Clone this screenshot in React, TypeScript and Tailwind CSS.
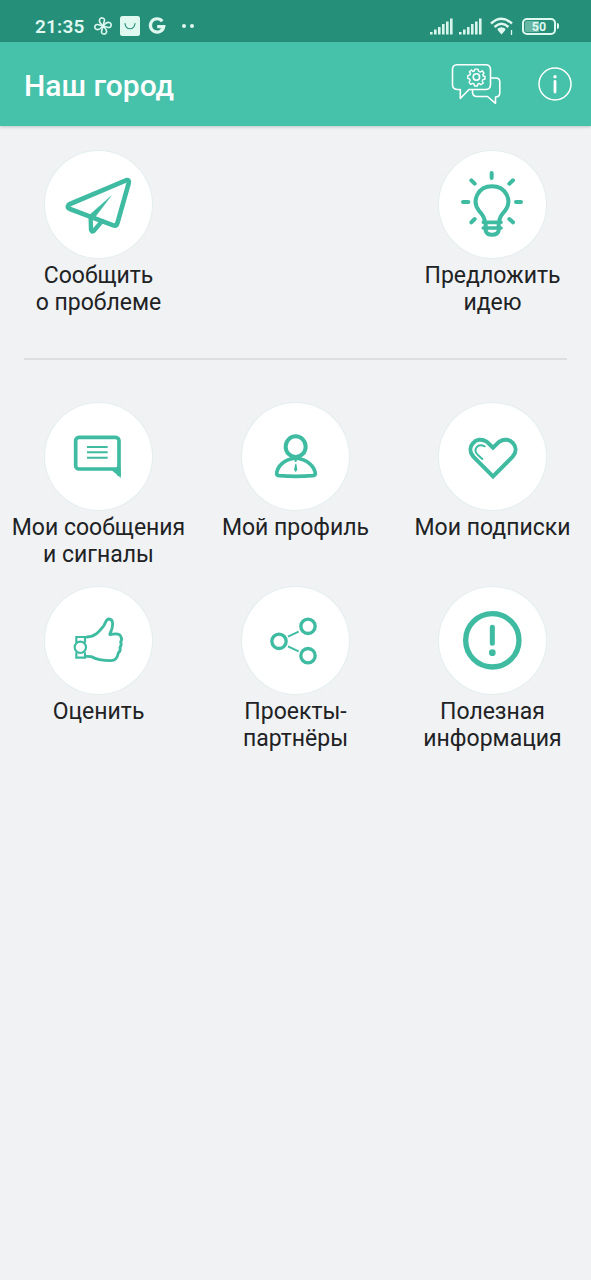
import React from "react"

type TypeTile = {
    icon: React.ReactNode
    lines: string[]
}

const Svg = ({ children }: { children: React.ReactNode }) => (
    <svg viewBox="0 0 321 321" className="size-full" fill="none" stroke="#3fbba2" strokeWidth="12" strokeLinecap="round" strokeLinejoin="round">
        {children}
    </svg>
)

const PlaneIcon = () => (
    <Svg>
        <path d="M69 165 Q70 161 75 159 L243 88 Q254 85 251 97 L217 217 Q214 226 205 223 L75 174 Q67 170 69 165Z" strokeWidth="14" />
        <path d="M137 202 L138 237 Q140 244 146 240 L170 212" strokeWidth="13" />
        <path d="M129 196 L199 134 L143 208 Z" fill="#3fbba2" strokeWidth="1" />
    </Svg>
)

const BulbIcon = () => (
    <Svg>
        <path d="M137 210 C136 196 127 188 120 179 C96 148 118 106 159 106 C200 106 222 148 198 179 C191 188 182 196 181 210" />
        <path d="M133 214 H186 M133 231 H186" strokeWidth="11" />
        <path d="M140 220 V238 Q142 251 159 251 Q177 251 179 238 V220" strokeWidth="12" />
        <path d="M158 66 V81 M97 88 L107 98 M222 88 L211 98 M72 153 H88 M231 153 H246 M97 214 L107 204 M222 214 L211 204" />
    </Svg>
)

const MessageIcon = () => (
    <Svg>
        <rect x="92" y="103" width="130" height="95" rx="10" strokeWidth="11" />
        <path d="M197 199 H227.5 V225 Z" fill="#3fbba2" stroke="none" />
        <path d="M222 190 V218" strokeWidth="11" strokeLinecap="butt" />
        <path d="M126 132 H188 M126 148 H188 M126 164 H188" strokeWidth="6" strokeLinecap="butt" />
    </Svg>
)

const ProfileIcon = () => (
    <Svg>
        <ellipse cx="161" cy="131" rx="30" ry="31" />
        <path d="M161 165 C126 169 105 190 104 213 Q105 217 112 218 Q161 222 212 218 Q219 217 220 213 C218 190 196 169 161 165Z" strokeWidth="11" />
        <path d="M156 168 H166 L163 177 H159Z M160 182 H163 L166 200 L161 207 L156 200Z" fill="#3fbba2" stroke="none" />
    </Svg>
)

const HeartIcon = () => (
    <Svg>
        <path d="M162 220 L103 161 C78 132 112 96 143 116 L162 134 L181 116 C212 96 246 132 221 161 Z" strokeLinejoin="miter" />
        <path d="M137 130 C115 120 101 140 116 155 L130 168" strokeWidth="6" />
    </Svg>
)

const ThumbIcon = () => (
    <Svg>
        <path d="M126 150 C154 149 166 129 175 118 C182 109 182 96 192 96 C205 97 204 111 201 124 C198 134 193 143 195 143 C207 140 225 138 228 150 Q232 157 227 165 Q231 173 225 181 Q228 190 220 198 C217 214 211 221 198 221 Q158 220 140 209 L125 208" strokeWidth="8.5" />
        <path d="M94 166 V150 H120 V165 M94 198 V212 H120 V198" strokeWidth="6.5" strokeLinejoin="miter" />
        <circle cx="106" cy="181" r="17" strokeWidth="6.5" />
    </Svg>
)

const ShareIcon = () => (
    <Svg>
        <circle cx="111" cy="163" r="21.5" strokeWidth="10" />
        <circle cx="198" cy="118" r="21.5" strokeWidth="10" />
        <circle cx="198" cy="206" r="21.5" strokeWidth="10" />
        <path d="M138 149 L170 134 M138 178 L170 193" strokeWidth="6" strokeLinecap="butt" />
    </Svg>
)

const AlertIcon = () => (
    <Svg>
        <circle cx="160" cy="160" r="80" strokeWidth="16" />
        <path d="M160 121 V169" strokeWidth="15" />
        <circle cx="160" cy="197" r="10" fill="#3fbba2" stroke="none" />
    </Svg>
)

const Tile = ({ icon, lines }: TypeTile) => {
    return (
        <div className="flex flex-col items-center">
            <span className="size-[107px] rounded-full bg-white shadow-[0_0_0_1px_#e4eeee]">{icon}</span>
            <p className="mt-1 text-center text-[23px] leading-[27px] whitespace-nowrap text-[#212224]">
                {lines.map((line) => (
                    <span key={line} className="block">{line}</span>
                ))}
            </p>
        </div>
    )
}

const Signal = () => (
    <svg viewBox="0 0 23 17" className="h-[17px] w-[23px]" fill="#d8f5ec">
        <rect x="0" y="14" width="2.6" height="2.5" />
        <rect x="4" y="11.5" width="2.6" height="5" />
        <rect x="8" y="9" width="2.6" height="7.5" />
        <rect x="12" y="6" width="2.6" height="10.5" />
        <rect x="16" y="3.5" width="2.6" height="13" />
        <rect x="20" y="0.5" width="2.6" height="16" />
    </svg>
)

const StatusBar = () => {
    return (
        <div className="flex h-[42px] items-center bg-[#268f79] pt-[10px] pr-8 pl-[35px] text-[#dff8f0]">
            <span className="mt-[2px] w-[50px] text-[19px] leading-8 font-semibold tracking-[0.2px]">21:35</span>
            <svg viewBox="0 0 18 18" className="ml-[9px] size-[18px]" fill="none" stroke="currentColor" strokeWidth="1.6" strokeLinejoin="round">
                <path d="M9 9 V3.5 C9 0.5 4 0.5 4 4 C4 7 7 7.5 9 9Z" transform="rotate(15 9 9)" />
                <path d="M9 9 V3.5 C9 0.5 4 0.5 4 4 C4 7 7 7.5 9 9Z" transform="rotate(105 9 9)" />
                <path d="M9 9 V3.5 C9 0.5 4 0.5 4 4 C4 7 7 7.5 9 9Z" transform="rotate(195 9 9)" />
                <path d="M9 9 V3.5 C9 0.5 4 0.5 4 4 C4 7 7 7.5 9 9Z" transform="rotate(285 9 9)" />
            </svg>
            <svg viewBox="0 0 20 20" className="ml-2 size-5">
                <rect width="20" height="20" rx="2.5" fill="#dff8f0" />
                <path d="M5 7.5 C6 14.5 14 14.5 15 7.5" fill="none" stroke="#268f79" strokeWidth="1.2" strokeLinecap="round" />
            </svg>
            <svg viewBox="0 0 18 18" className="ml-[8px] size-[18px]" fill="none" stroke="currentColor" strokeWidth="3.2">
                <path d="M14.3 4.2 A6.7 6.7 0 1 0 15.7 9.6 H9.2" />
            </svg>
            <span className="ml-[16px] size-[4px] rounded-full bg-current" />
            <span className="ml-[4px] size-[4px] rounded-full bg-current" />
            <div className="ml-auto flex items-center">
                <Signal />
                <span className="w-[6px]" />
                <Signal />
                <svg viewBox="0 0 24 18" className="ml-[8px] h-[18px] w-6" fill="none" stroke="currentColor" strokeWidth="2.4">
                    <path d="M1 6.5 Q11.5 -3 22 6.5 M4.5 10 Q11.5 3.5 18.5 10 M8 13 Q11.5 10 15 13" />
                    <path d="M8 13.5 L11.5 17.5 L15 13.5 Q11.5 11 8 13.5Z" fill="currentColor" stroke="none" />
                    <path d="M21.5 13 V18" strokeWidth="1.3" />
                </svg>
                <span className="ml-[8px] flex h-[17px] w-[34px] rounded-[5px] border-2 border-current bg-[linear-gradient(90deg,#66b7a3_50%,transparent_50%)] bg-clip-content p-px">
                    <span className="w-full text-center text-[12.5px] leading-[12px] font-bold">50</span>
                </span>
                <span className="ml-px h-[6px] w-[2px] rounded-r bg-current" />
            </div>
        </div>
    )
}

const Header = () => {
    return (
        <header className="flex h-[84px] items-center bg-[#46c1aa] pr-[19px] pl-6 text-white shadow-[0_1px_3px_rgba(0,0,0,0.2)]">
            <h1 className="mt-[2px] text-[30px] font-medium">Наш город</h1>
            <svg viewBox="0 0 50 42" className="ml-auto h-[42px] w-[50px]" fill="none" stroke="currentColor" strokeWidth="1.6" strokeLinejoin="round">
                <path d="M6 1.8 H34.5 Q39.5 1.8 39.5 6.8 V21.5 Q39.5 26.5 34.5 26.5 H18 L9.3 35.5 V26.5 H6 Q1.5 26 1.5 21.5 V6.8 Q1.5 1.8 6 1.8Z" />
                <path d="M39.5 15 H45 Q48.8 15 48.8 19 V30 Q48.8 33.8 44.5 34 V40.3 L36.5 33.5 H26 Q21.5 33.5 21.5 29 V26.5" />
                <circle cx="25.4" cy="14" r="3.2" />
                <path d="M23.8 6.1 H27 L27.5 8.2 L29.3 9 L31.2 7.8 L33 10 L31.7 11.6 L32.2 13 L34 13.5 V16 L31.9 16.6 L31.2 18.2 L32.3 20 L30 21.7 L28.5 20.5 L26.9 21 L26.3 23 H23.6 L23 21 L21.5 20.3 L19.6 21.4 L18 19.2 L19.2 17.6 L18.6 16 L16.8 15.4 V12.7 L18.8 12 L19.5 10.5 L18.4 8.8 L20.4 7 L22 8.5 L23.3 8Z" strokeWidth="1.4" />
            </svg>
            <svg viewBox="0 0 34 34" className="ml-[37px] size-[34px]" fill="none" stroke="currentColor">
                <circle cx="17" cy="17" r="16" strokeWidth="1.5" />
                <path d="M17 14.5 V25" strokeWidth="2.8" strokeLinecap="round" />
                <circle cx="17" cy="9.7" r="1.7" fill="currentColor" stroke="none" />
            </svg>
        </header>
    )
}

export default function App() {
    return (
        <div className="min-h-screen bg-[#f0f2f4] font-[Roboto,sans-serif]">
            <StatusBar />
            <Header />
            <main>
                <div className="grid grid-cols-3 pt-[25px]">
                    <Tile icon={<PlaneIcon />} lines={["Сообщить", "о проблеме"]} />
                    <span />
                    <Tile icon={<BulbIcon />} lines={["Предложить", "идею"]} />
                </div>
                <hr className="mx-6 mt-[42px] border-t-2 border-[#dcdee1]" />
                <div className="mt-[43px] grid grid-cols-3 gap-y-[19px]">
                    <Tile icon={<MessageIcon />} lines={["Мои сообщения", "и сигналы"]} />
                    <Tile icon={<ProfileIcon />} lines={["Мой профиль"]} />
                    <Tile icon={<HeartIcon />} lines={["Мои подписки"]} />
                    <Tile icon={<ThumbIcon />} lines={["Оценить"]} />
                    <Tile icon={<ShareIcon />} lines={["Проекты-", "партнёры"]} />
                    <Tile icon={<AlertIcon />} lines={["Полезная", "информация"]} />
                </div>
            </main>
        </div>
    )
}
